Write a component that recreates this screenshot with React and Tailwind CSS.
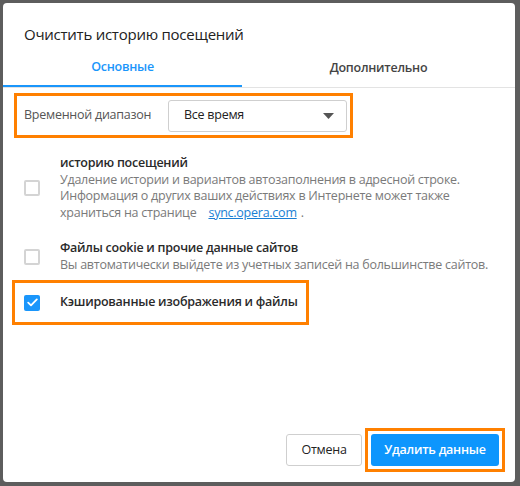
const Checkbox = ({ checked }) => (
  checked ? (
    <div className="w-4 h-4 rounded-[2px] bg-[#1a96fb] flex items-center justify-center shrink-0">
      <svg width="11" height="9" viewBox="0 0 11 9" fill="none">
        <path d="M1.2 4.6 L4 7.3 L9.8 1.4" stroke="#fff" strokeWidth="1.8" strokeLinecap="round" strokeLinejoin="round" />
      </svg>
    </div>
  ) : (
    <div className="w-4 h-4 rounded-[2px] border-2 border-[#d4d4d4] bg-white shrink-0" />
  )
)

export default function App() {
  return (
    <div
      className="w-[520px] h-[486px] bg-[#5d5d5d] pt-[3px] pl-[3px] overflow-hidden tracking-[-0.25px]"
      style={{ fontFamily: '"Open Sans", "Noto Sans", sans-serif' }}
    >
      <div className="w-[512px] h-[479px] bg-white rounded-[4px] flex flex-col">
        {/* Title */}
        <div className="pt-[20px] pl-[21px] text-[15px] leading-[22px] text-[#222]">
          Очистить историю посещений
        </div>

        {/* Tabs */}
        <div className="mt-[4px] flex border-b border-[#e3e3e3]">
          <div className="w-[239px] h-[38px] flex items-center justify-center text-[12.5px] font-semibold text-[#1a96fb] border-b-2 border-[#1a96fb] -mb-px">
            Основные
          </div>
          <div className="flex-1 h-[38px] flex items-center justify-center text-[12.5px] font-semibold text-[#444]">
            Дополнительно
          </div>
        </div>

        {/* Time range */}
        <div className="mt-[5px] ml-[11px] w-[339px] h-[45px] border-[3px] border-[#ff8000] flex items-center pl-[7px]">
          <span className="text-[12.5px] text-[#555] w-[144px]">Временной диапазон</span>
          <div className="w-[179px] h-[32px] border border-[#cfcfcf] rounded-[3px] flex items-center justify-between pl-[15px] pr-[12px]">
            <span className="text-[12.5px] text-[#222]">Все время</span>
            <svg width="11" height="6" viewBox="0 0 11 6">
              <path d="M0 0 H11 L5.5 6 Z" fill="#555" />
            </svg>
          </div>
        </div>

        {/* Items */}
        <div className="mt-[17px] pl-[21px] flex items-center">
          <Checkbox />
          <div className="ml-[20px] text-[12.5px] leading-[16.5px]">
            <div className="text-[#2a2a2a] font-semibold">историю посещений</div>
            <div className="text-[#7a7a7a]">Удаление истории и вариантов автозаполнения в адресной строке.</div>
            <div className="text-[#7a7a7a]">Информация о других ваших действиях в Интернете может также</div>
            <div className="text-[#7a7a7a]">
              храниться на странице
              <span className="ml-[12px] text-[#1a7fd4] underline">sync.opera.com</span>
              <span className="ml-[4px]">.</span>
            </div>
          </div>
        </div>

        <div className="mt-[19px] pl-[21px] flex items-center">
          <Checkbox />
          <div className="ml-[20px] text-[12.5px] leading-[16.5px]">
            <div className="text-[#2a2a2a] font-semibold">Файлы cookie и прочие данные сайтов</div>
            <div className="text-[#7a7a7a] whitespace-nowrap">Вы автоматически выйдете из учетных записей на большинстве сайтов.</div>
          </div>
        </div>

        <div className="mt-[7px] ml-[9px] w-[297px] h-[45px] border-[3px] border-[#ff8000] flex items-center pl-[9px]">
          <Checkbox checked />
          <span className="ml-[20px] text-[12.5px] text-[#2a2a2a] font-semibold">Кэшированные изображения и файлы</span>
        </div>

        {/* Footer */}
        <div className="mt-auto mb-[10px] mr-[10px] flex items-center justify-end gap-[3px]">
          <button className="w-[76px] h-[32px] border border-[#cfcfcf] rounded-[3px] bg-white text-[12.5px] text-[#222]">
            Отмена
          </button>
          <div className="border-[3px] border-[#ff8000] p-[3px]">
            <button className="w-[128px] h-[32px] rounded-[3px] bg-[#0d96fd] text-[12.5px] font-semibold text-white">
              Удалить данные
            </button>
          </div>
        </div>
      </div>
    </div>
  )
}
